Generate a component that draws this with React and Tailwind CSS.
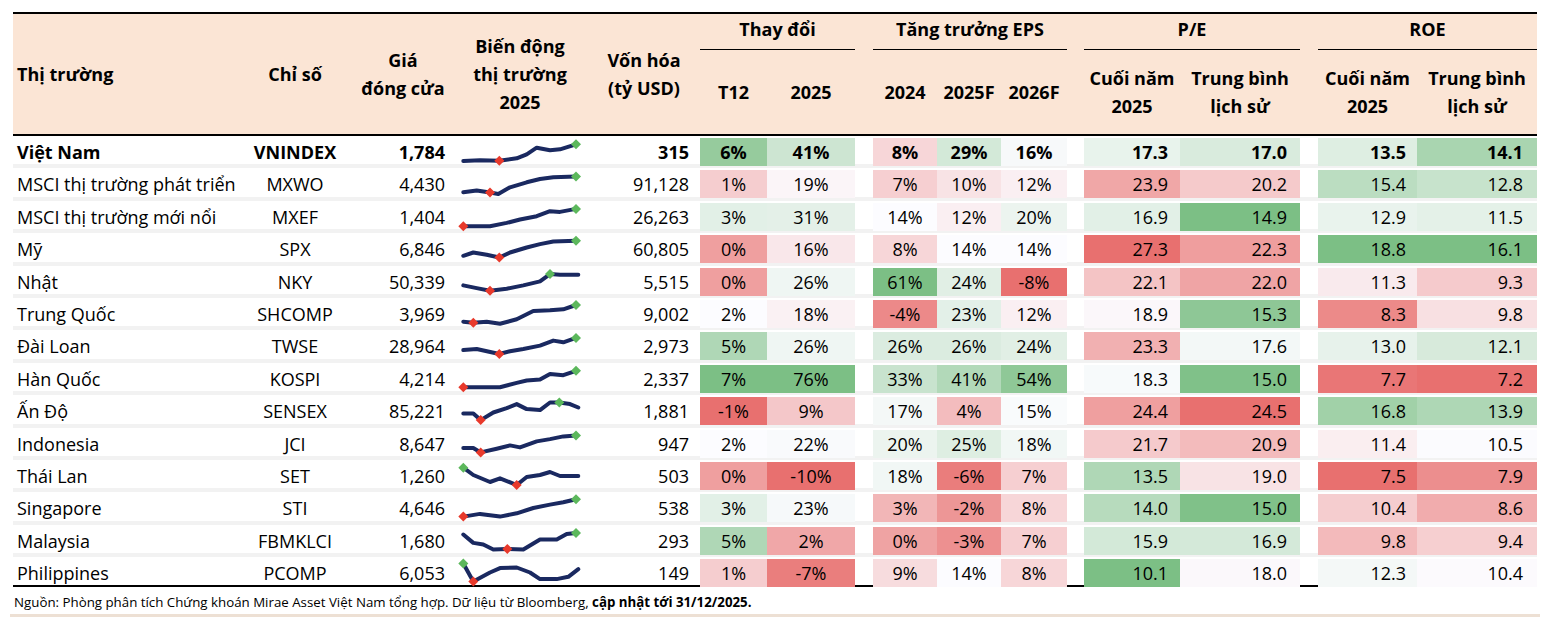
import React from 'react';

const rows = [
  ['Việt Nam', 'VNINDEX', '1,784', '315', [6, 41, 8, 29, 16, 17.3, 17.0, 13.5, 14.1],
    [[1.3, 24], [18, 23.3], [37.3, 23.7], [54.7, 21.3], [64.7, 17.3], [74.7, 10.7], [88, 13.3], [98, 12.3], [114, 7.3]], 2, 8],
  ['MSCI thị trường phát triển', 'MXWO', '4,430', '91,128', [1, 19, 7, 10, 12, 23.9, 20.2, 15.4, 12.8],
    [[1.3, 23.3], [14.7, 21.6], [28, 23.6], [36.3, 25], [48, 18.3], [64.7, 13.3], [78, 10], [91.3, 8.3], [114, 7.6]], 2, 8],
  ['MSCI thị trường mới nổi', 'MXEF', '1,404', '26,263', [3, 31, 14, 12, 20, 16.9, 14.9, 12.9, 11.5],
    [[1.3, 24.2], [28, 24.2], [44.7, 20.9], [58, 17.5], [74.7, 14.2], [88, 9.2], [98, 9.9], [114, 6.9]], 0, 7],
  ['Mỹ', 'SPX', '6,846', '60,805', [0, 16, 8, 14, 14, 27.3, 22.3, 18.8, 16.1],
    [[1.3, 21.8], [11.3, 18.5], [24.7, 20.8], [37.3, 23.5], [48, 18.5], [64.7, 13.5], [78, 10.1], [91.3, 7.5], [114, 6.8]], 3, 8],
  ['Nhật', 'NKY', '50,339', '5,515', [0, 26, 61, 24, -8, 22.1, 22.0, 11.3, 9.3],
    [[1.3, 18.4], [14.7, 21.1], [28, 23.7], [44.7, 21.7], [61.3, 18.4], [78, 14.4], [88, 7.1], [98, 7.7], [116.3, 7.7]], 2, 6],
  ['Trung Quốc', 'SHCOMP', '3,969', '9,002', [2, 18, -4, 23, 12, 18.9, 15.3, 8.3, 9.8],
    [[1.3, 22.7], [11.3, 23.7], [24.7, 22.7], [38, 24.7], [54.7, 20.3], [71.3, 12], [88, 11.3], [101.3, 10.3], [114, 6]], 1, 8],
  ['Đài Loan', 'TWSE', '28,964', '2,973', [5, 26, 26, 26, 24, 23.3, 17.6, 13.0, 12.1],
    [[1.3, 19], [14.7, 18], [37.3, 23], [48, 20.3], [61.3, 18], [78, 14.6], [91.3, 9.6], [101.3, 11.3], [114, 6.9]], 2, 8],
  ['Hàn Quốc', 'KOSPI', '4,214', '2,337', [7, 76, 33, 41, 54, 18.3, 15.0, 7.7, 7.2],
    [[1.3, 23.2], [38, 23.2], [54.7, 18.9], [64.7, 16.5], [78, 15.5], [88, 9.9], [101.3, 11.2], [114, 6.8]], 0, 7],
  ['Ấn Độ', 'SENSEX', '85,221', '1,881', [-1, 9, 17, 4, 15, 24.4, 24.5, 16.8, 13.9],
    [[1.3, 17.5], [11.3, 17.5], [18.7, 24.1], [31.3, 16.5], [44.7, 12.1], [54.7, 8.1], [64.7, 13.1], [78, 14.1], [88, 6.5], [97.3, 6.5], [108, 8.1], [116.3, 11.5]], 2, 9],
  ['Indonesia', 'JCI', '8,647', '947', [2, 22, 20, 25, 18, 21.7, 20.9, 11.4, 10.5],
    [[1.3, 19.1], [11.3, 19.1], [18.7, 23.4], [34.7, 19.7], [48, 16.4], [58, 18.4], [74.7, 12.4], [88, 10.1], [101.3, 7.4], [114, 6.4]], 2, 9],
  ['Thái Lan', 'SET', '1,260', '503', [0, -10, 18, -6, 7, 13.5, 19.0, 7.5, 7.9],
    [[1.3, 6.7], [11.3, 14], [28, 21], [38, 17.3], [54.7, 24], [64.7, 16], [78, 14], [88, 11], [98, 15], [116.3, 15]], 4, 0],
  ['Singapore', 'STI', '4,646', '538', [3, 23, 3, -2, 8, 14.0, 15.0, 10.4, 8.6],
    [[1.3, 23.6], [18, 20.9], [38, 23.6], [54.7, 20.3], [71.3, 15], [88, 11.6], [101.3, 9.3], [114, 6.3]], 0, 7],
  ['Malaysia', 'FBMKLCI', '1,680', '293', [5, 2, 0, -3, 7, 15.9, 16.9, 9.8, 9.4],
    [[1.3, 8.5], [11.3, 16.9], [21.3, 18.5], [31.3, 23.5], [45.3, 22.9], [61.3, 23.5], [78, 13.5], [94.7, 13.5], [104.7, 7.9], [114, 6.9]], 4, 9],
  ['Philippines', 'PCOMP', '6,053', '149', [1, -7, 9, 14, 8, 10.1, 18.0, 12.3, 10.4],
    [[1.3, 5.5], [11.3, 23.5], [28, 14.5], [38, 10.1], [54.7, 9.5], [68, 14.5], [78, 21.1], [94.7, 21.1], [106.3, 18.8], [116.3, 11.1]], 1, 0],
];

const WHITE = [252, 252, 255];
const GREEN = [124, 191, 133];
const RED = [232, 112, 111];

function mix(a, b, t) {
  const c = a.map((x, i) => Math.round(x + (b[i] - x) * t));
  return `rgb(${c[0]},${c[1]},${c[2]})`;
}

function median(arr) {
  const s = [...arr].sort((a, b) => a - b);
  const m = Math.floor(s.length / 2);
  return s.length % 2 ? s[m] : (s[m - 1] + s[m]) / 2;
}

// scale groups: which value indexes share one colour scale
const groups = [[0], [1], [2, 3, 4], [5], [6], [7], [8]];
const reversed = { 5: true, 6: true };

const scales = {};
groups.forEach((g) => {
  const vals = rows.flatMap((r) => g.map((i) => r[4][i]));
  const s = { min: Math.min(...vals), max: Math.max(...vals), mid: median(vals) };
  g.forEach((i) => (scales[i] = s));
});

function cellColor(i, v) {
  const { min, max, mid } = scales[i];
  const good = reversed[i] ? v <= mid : v >= mid;
  let t;
  if (v >= mid) t = max === mid ? 0 : (v - mid) / (max - mid);
  else t = mid === min ? 0 : (mid - v) / (mid - min);
  return mix(WHITE, good ? GREEN : RED, Math.min(1, t));
}

const fmt = (i, v) => (i <= 4 ? `${v}%` : v.toFixed(1));

function Spark({ pts, lo, hi }) {
  const d = pts.map((p) => p.join(',')).join(' ');
  const diamond = (p, fill) => (
    <polygon
      points={`${p[0]},${p[1] - 5} ${p[0] + 5},${p[1]} ${p[0]},${p[1] + 5} ${p[0] - 5},${p[1]}`}
      fill={fill}
    />
  );
  return (
    <svg width="122" height="28" viewBox="-1 0 122 28" className="overflow-visible">
      <polyline points={d} fill="none" stroke="#1a2960" strokeWidth="4" strokeLinejoin="round" strokeLinecap="round" />
      {diamond(pts[lo], '#e8392b')}
      {diamond(pts[hi], '#5cb85c')}
    </svg>
  );
}

const grid =
  'grid grid-cols-[227px_110px_98px_144px_108px_67px_88px_18px_64px_64px_66px_17px_96px_120px_18px_99px_120px]';

function Row({ r }) {
  const bold = r[0] === 'Việt Nam';
  const v = r[4];
  const cell = (i, align) => (
    <div
      key={i}
      className={`h-full flex items-center ${align}`}
      style={{ backgroundColor: cellColor(i, v[i]) }}
    >
      {fmt(i, v[i])}
    </div>
  );
  return (
    <div className={`${grid} h-[28.4px] bg-white text-[18px] leading-[28px] pt-[2px] text-black ${bold ? 'font-bold' : ''}`}>
      <div className="flex items-center pl-[4px] whitespace-nowrap">{r[0]}</div>
      <div className="flex items-center justify-center">{r[1]}</div>
      <div className="flex items-center justify-end pr-[3px]">{r[2]}</div>
      <div className="flex items-center pl-[13px] -mt-[2px]">
        <Spark pts={r[5]} lo={r[6]} hi={r[7]} />
      </div>
      <div className="flex items-center justify-end pr-[11px]">{r[3]}</div>
      {cell(0, 'justify-center')}
      {cell(1, 'justify-center')}
      <div />
      {cell(2, 'justify-center')}
      {cell(3, 'justify-center')}
      {cell(4, 'justify-center')}
      <div />
      {cell(5, 'justify-end pr-[12px]')}
      {cell(6, 'justify-end pr-[13px]')}
      <div />
      {cell(7, 'justify-end pr-[11px]')}
      {cell(8, 'justify-end pr-[14px]')}
    </div>
  );
}

function GroupHead({ title, span }) {
  return (
    <div className={`${span} flex items-center justify-center border-b-[1.5px] border-black pb-[5px]`}>{title}</div>
  );
}

function Sub({ children }) {
  return <div className="flex items-center justify-center text-center leading-[28px]">{children}</div>;
}

export default function App() {
  return (
    <div className="w-[1544px] h-[617px] bg-white pt-[12px] pl-[13px] font-['Open_Sans','Noto_Sans',sans-serif] text-black overflow-hidden">
      <div className="w-[1524px]">
        <div className={`${grid} grid-rows-[36px_84px] bg-[#fbe5d5] border-t-2 border-b-2 border-black font-bold text-[18px] leading-[28px]`}>
          <div className="row-span-2 flex items-center pl-[4px]">Thị trường</div>
          <div className="row-span-2 flex items-center justify-center">Chỉ số</div>
          <div className="row-span-2 flex items-center justify-center text-center pl-[8px]">
            Giá
            <br />
            đóng cửa
          </div>
          <div className="row-span-2 flex items-center justify-center text-center">
            Biến động
            <br />
            thị trường
            <br />
            2025
          </div>
          <div className="row-span-2 flex items-center justify-center text-center pr-[4px]">
            Vốn hóa
            <br />
            (tỷ USD)
          </div>
          <GroupHead title="Thay đổi" span="col-span-2" />
          <div className="row-span-2" />
          <GroupHead title="Tăng trưởng EPS" span="col-span-3" />
          <div className="row-span-2" />
          <GroupHead title="P/E" span="col-span-2" />
          <div className="row-span-2" />
          <GroupHead title="ROE" span="col-span-2" />
          <Sub>T12</Sub>
          <Sub>2025</Sub>
          <Sub>2024</Sub>
          <Sub>2025F</Sub>
          <Sub>2026F</Sub>
          <Sub>
            Cuối năm
            <br />
            2025
          </Sub>
          <Sub>
            Trung bình
            <br />
            lịch sử
          </Sub>
          <Sub>
            Cuối năm
            <br />
            2025
          </Sub>
          <Sub>
            Trung bình
            <br />
            lịch sử
          </Sub>
        </div>
        <div className="flex flex-col gap-[4px] bg-[#f2f2f2] border-b-2 border-black">
          {rows.map((r) => (
            <Row key={r[0]} r={r} />
          ))}
        </div>
      </div>
      <div className="pt-[7px] pl-[1px] text-[13.3px] leading-[17px] whitespace-nowrap">
        Nguồn: Phòng phân tích Chứng khoán Mirae Asset Việt Nam tổng hợp. Dữ liệu từ Bloomberg,{' '}
        <span className="font-bold">cập nhật tới 31/12/2025.</span>
      </div>
      <div className="mt-[3px] -ml-[3px] w-[1530px] h-[4px] bg-[#ede0d4]" />
    </div>
  );
}
